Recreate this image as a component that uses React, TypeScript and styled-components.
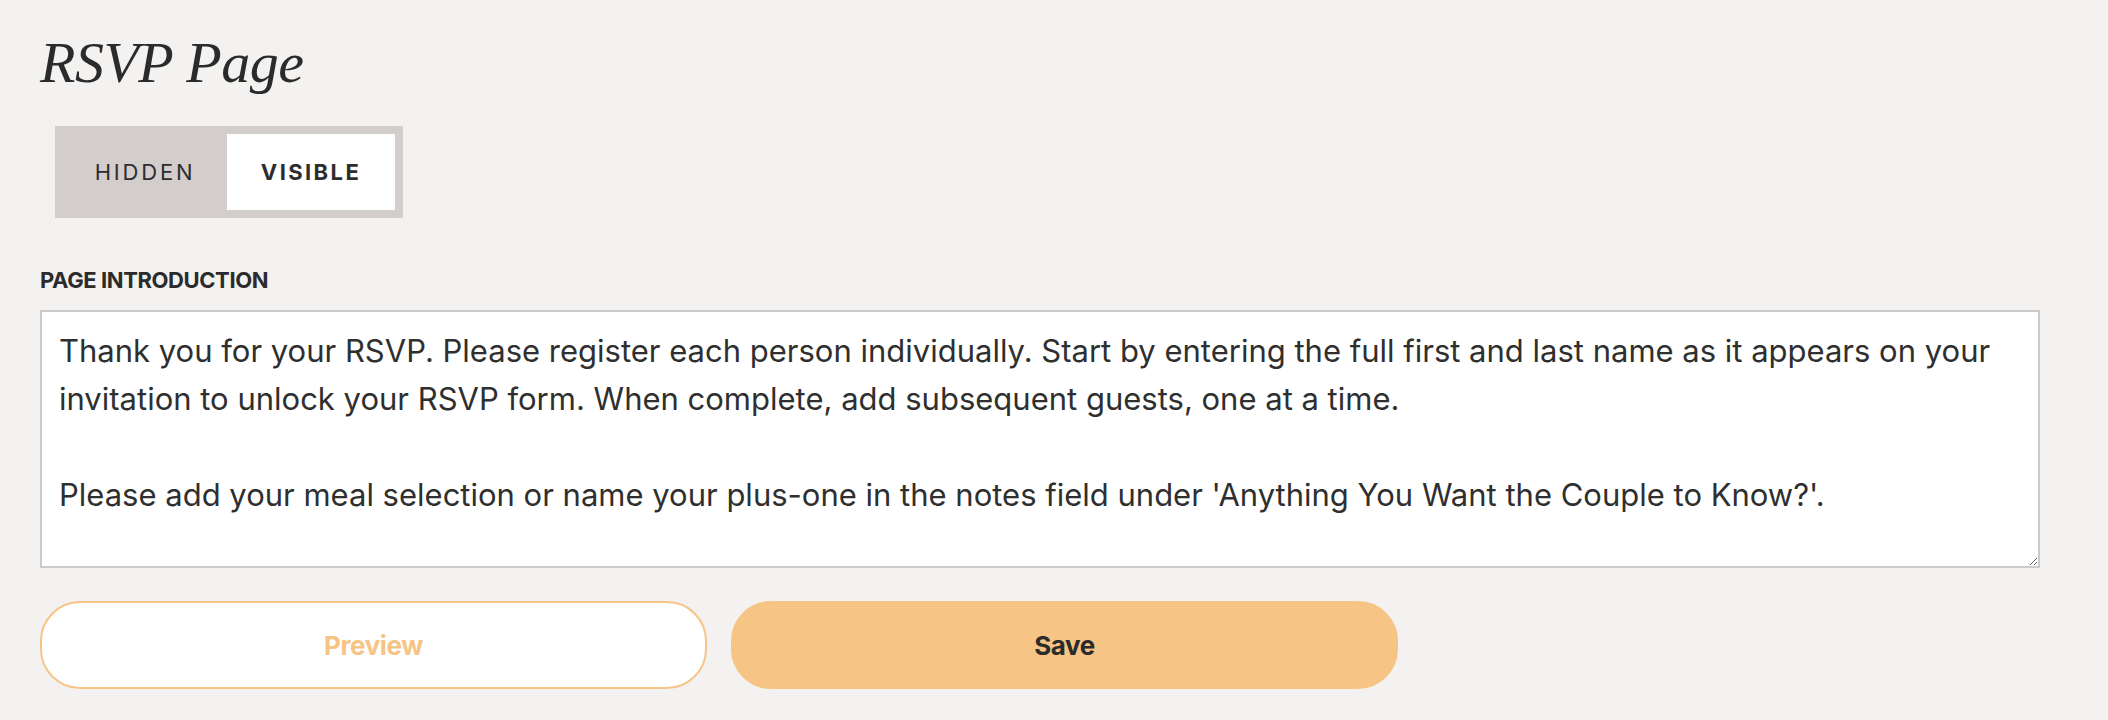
import React from "react";
import styled, { createGlobalStyle } from "styled-components";

const GlobalStyle = createGlobalStyle`
  html, body {
    margin: 0;
    padding: 0;
    background: #f3f2f0;
  }
  body {
    font-family: "Inter", "Liberation Sans", sans-serif;
    color: #2d2d2d;
  }
  * { box-sizing: border-box; }
`;

const Page = styled.main`
  display: flex;
  flex-direction: column;
  align-items: flex-start;
  padding: 28px 0 0 40px;
  min-height: 720px;
`;

const Title = styled.h1`
  margin: 0;
  font-family: "Liberation Serif", "Times New Roman", serif;
  font-style: italic;
  font-weight: 400;
  font-size: 58px;
  line-height: 70px;
  letter-spacing: -0.5px;
  color: #2b2b2b;
`;

const Toggle = styled.div`
  display: flex;
  margin: 28px 0 0 15px;
  padding: 8px;
  background: #d3cecb;
`;

const Segment = styled.button<{ $active?: boolean; $w: number }>`
  width: ${(p) => p.$w}px;
  height: 76px;
  border: none;
  padding: 0;
  display: flex;
  align-items: center;
  justify-content: center;
  background: ${(p) => (p.$active ? "#ffffff" : "transparent")};
  font-family: "Inter", "Liberation Sans", sans-serif;
  font-size: 22px;
  font-weight: ${(p) => (p.$active ? 700 : 400)};
  letter-spacing: ${(p) => (p.$active ? "2.4px" : "2.8px")};
  text-transform: uppercase;
  color: #2d2d2d;
  cursor: pointer;
`;

const Label = styled.label`
  display: block;
  margin-top: 51px;
  font-family: "Inter", "Liberation Sans", sans-serif;
  font-weight: 700;
  font-size: 22px;
  line-height: 22px;
  letter-spacing: -0.4px;
  text-transform: uppercase;
  color: #2b2b2b;
`;

const Intro = styled.textarea`
  display: block;
  margin-top: 19px;
  width: 2000px;
  height: 258px;
  padding: 15px 17px;
  border: 2px solid #cbcbcb;
  border-radius: 0;
  background: #ffffff;
  font-family: "Inter", "Lato", sans-serif;
  font-size: 31px;
  line-height: 48px;
  color: #2f2f2f;
  resize: both;
  outline: none;
`;

const Actions = styled.div`
  display: flex;
  gap: 24px;
  margin-top: 33px;
`;

const ActionButton = styled.button<{ $primary?: boolean }>`
  width: 667px;
  height: 88px;
  border-radius: 40px;
  border: 2px solid #f6c485;
  background: ${(p) => (p.$primary ? "#f6c485" : "#ffffff")};
  color: ${(p) => (p.$primary ? "#2b2b2b" : "#f6c485")};
  font-family: "Inter", "Liberation Sans", sans-serif;
  font-weight: 700;
  font-size: 26px;
  letter-spacing: -0.4px;
  cursor: pointer;
`;

const introText =
  "Thank you for your RSVP. Please register each person individually. Start by entering the full first and last name as it appears on your invitation to unlock your RSVP form. When complete, add subsequent guests, one at a time.\n\nPlease add your meal selection or name your plus-one in the notes field under 'Anything You Want the Couple to Know?'.";

export default function App() {
  return (
    <>
      <GlobalStyle />
      <Page>
        <Title>RSVP Page</Title>
        <Toggle>
          <Segment $w={164}>Hidden</Segment>
          <Segment $w={168} $active>
            Visible
          </Segment>
        </Toggle>
        <Label htmlFor="intro">Page Introduction</Label>
        <Intro id="intro" defaultValue={introText} />
        <Actions>
          <ActionButton>Preview</ActionButton>
          <ActionButton $primary>Save</ActionButton>
        </Actions>
      </Page>
    </>
  );
}
